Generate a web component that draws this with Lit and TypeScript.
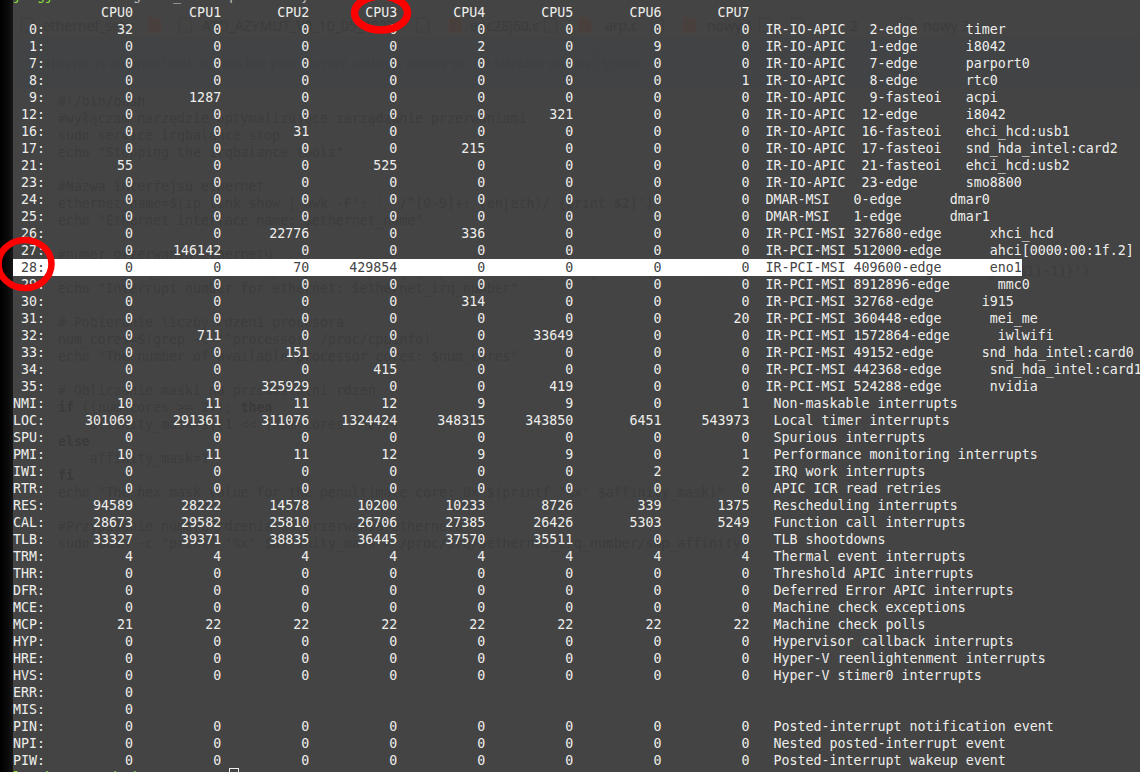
import { LitElement, html, css } from "lit";
import { customElement } from "lit/decorators.js";

type Row = [string, string[], number?, string?, number?, string?];

const Z = (n = 8) => Array(n).fill("0");
const io = "IR-IO-APIC";
const pci = "IR-PCI-MSI";
const rows: Row[] = [
  ["0", ["32", ...Z(7)], 94, io, 107, "2-edge|119|timer"],
  ["1", ["0","0","0","0","2","0","9","0"], 94, io, 107, "1-edge|119|i8042"],
  ["7", Z(), 94, io, 107, "7-edge|119|parport0"],
  ["8", [...Z(7), "1"], 94, io, 107, "8-edge|119|rtc0"],
  ["9", ["0","1287",...Z(6)], 94, io, 107, "9-fasteoi|119|acpi"],
  ["12", ["0","0","0","0","0","321","0","0"], 94, io, 106, "12-edge|119|i8042"],
  ["16", ["0","0","31",...Z(5)], 94, io, 106, "16-fasteoi|119|ehci_hcd:usb1"],
  ["17", ["0","0","0","0","215","0","0","0"], 94, io, 106, "17-fasteoi|119|snd_hda_intel:card2"],
  ["21", ["55","0","0","525",...Z(4)], 94, io, 106, "21-fasteoi|119|ehci_hcd:usb2"],
  ["23", Z(), 94, io, 106, "23-edge|119|smo8800"],
  ["24", Z(), 94, "DMAR-MSI", 105, "0-edge|117|dmar0"],
  ["25", Z(), 94, "DMAR-MSI", 105, "1-edge|117|dmar1"],
  ["26", ["0","0","22776","0","336","0","0","0"], 94, pci, 105, "327680-edge|122|xhci_hcd"],
  ["27", ["0","146142",...Z(6)], 94, pci, 105, "512000-edge|122|ahci[0000:00:1f.2]"],
  ["28", ["0","0","70","429854",...Z(4)], 94, pci, 105, "409600-edge|122|eno1"],
  ["29", Z(), 94, pci, 105, "8912896-edge|123|mmc0"],
  ["30", ["0","0","0","0","314","0","0","0"], 94, pci, 105, "32768-edge|121|i915"],
  ["31", [...Z(7), "20"], 94, pci, 105, "360448-edge|122|mei_me"],
  ["32", ["0","711","0","0","0","33649","0","0"], 94, pci, 105, "1572864-edge|123|iwlwifi"],
  ["33", ["0","0","151",...Z(5)], 94, pci, 105, "49152-edge|121|snd_hda_intel:card0"],
  ["34", ["0","0","0","415",...Z(4)], 94, pci, 105, "442368-edge|122|snd_hda_intel:card1"],
  ["35", ["0","0","325929","0","0","419","0","0"], 94, pci, 105, "524288-edge|122|nvidia"],
  ["NMI", ["10","11","11","12","9","9","0","1"], 95, "Non-maskable interrupts"],
  ["LOC", ["301069","291361","311076","1324424","348315","343850","6451","543973"], 95, "Local timer interrupts"],
  ["SPU", Z(), 95, "Spurious interrupts"],
  ["PMI", ["10","11","11","12","9","9","0","1"], 95, "Performance monitoring interrupts"],
  ["IWI", [...Z(6),"2","2"], 95, "IRQ work interrupts"],
  ["RTR", Z(), 95, "APIC ICR read retries"],
  ["RES", ["94589","28222","14578","10200","10233","8726","339","1375"], 95, "Rescheduling interrupts"],
  ["CAL", ["28673","29582","25810","26706","27385","26426","5303","5249"], 95, "Function call interrupts"],
  ["TLB", ["33327","39371","38835","36445","37570","35511","0","0"], 95, "TLB shootdowns"],
  ["TRM", Array(8).fill("4"), 95, "Thermal event interrupts"],
  ["THR", Z(), 95, "Threshold APIC interrupts"],
  ["DFR", Z(), 95, "Deferred Error APIC interrupts"],
  ["MCE", Z(), 95, "Machine check exceptions"],
  ["MCP", ["21",...Array(7).fill("22")], 95, "Machine check polls"],
  ["HYP", Z(), 95, "Hypervisor callback interrupts"],
  ["HRE", Z(), 95, "Hyper-V reenlightenment interrupts"],
  ["HVS", Z(), 95, "Hyper-V stimer0 interrupts"],
  ["ERR", ["0"]],
  ["MIS", ["0"]],
  ["PIN", Z(), 95, "Posted-interrupt notification event"],
  ["NPI", Z(), 95, "Nested posted-interrupt event"],
  ["PIW", Z(), 95, "Posted-interrupt wakeup event"],
];

function lineFor(r: Row): string {
  const [label, vals, c1, t1, c2, rest] = r;
  let s = (label + ":").padStart(4);
  vals.forEach((v, i) => {
    s += v.padStart(i === 0 ? 11 : 10) + (i < vals.length - 1 ? " " : "");
  });
  if (c1 !== undefined && t1) {
    s = s.padEnd(c1) + t1;
    if (c2 !== undefined && rest) {
      const [a, c3, b] = rest.split("|");
      s = s.padEnd(c2) + a;
      s = s.padEnd(Number(c3)) + b;
    }
  }
  return s;
}

const header = "    " + Array.from({ length: 8 }, (_, i) => ("CPU" + i).padStart(i === 0 ? 11 : 10)).join(" ");

const ghost: [string, boolean?][] = [
  ["#!/bin/bash"],
  ["#wyłączam narzędzie optymalizujące zarządzanie przerwaniami"],
  ["sudo service irqbalance stop"],
  ['echo "Stopping the irqbalance tools"'],
  [""],
  ["#Nazwa interfejsu ethernet"],
  ["ethernet_name=$(ip link show | awk -F': ' '/^[0-9]+: (en|eth)/ {print $2}')"],
  ['echo "Ethernet interface name: $ethernet_name"'],
  [""],
  ["#numer przerwania ethernetu"],
  ["ethernet_irq_number=$(cat /proc/interrupts | grep \"$ethernet_name\" | awk '{print $1}' | awk '{print substr($1, 1, length($1)-1)}')"],
  ['echo "Interrupt number for ethernet: $ethernet_irq_number"'],
  [""],
  ["# Pobieranie liczby rdzeni procesora"],
  ["num_cores=$(grep -c '^processor' /proc/cpuinfo)"],
  ['echo "The number of available processor cores: $num_cores"'],
  [""],
  ["# Obliczanie maski na przedostatni rdzeń"],
  ["if ((num_cores >= 2)); then", true],
  ["    affinity_mask=$((1 << (num_cores - 2)))"],
  ["else", true],
  ["    affinity_mask=1"],
  ["fi", true],
  ["echo \"The hex mask value for the penultimate core: 0x $(printf '%x' $affinity_mask)\""],
  [""],
  ["#Przypisanie numeru rdzenia do przerwania ethernetu"],
  ['sudo bash -c "printf \'%x\' $affinity_mask > /proc/irq/$ethernet_irq_number/smp_affinity"'],
];

const tabs: [number, string][] = [
  [43, "ethernet_setu"],
  [202, "ATD_AZYMUT_V0_10_05_2023"],
  [470, "enc28j60.c"],
  [605, "arp.c"],
  [707, "nowy 1"],
  [850, "2"],
  [923, "nowy 3"],
];
const icons: [number, boolean][] = [
  [20, false], [147, true], [178, false], [415, false], [448, true], [543, false],
  [577, true], [650, false], [682, true], [758, false], [790, false], [899, false],
];

@customElement("app-root")
export class AppRoot extends LitElement {
  static styles = css`
    :host {
      display: flex;
      width: 1140px;
      height: 772px;
      overflow: hidden;
      position: relative;
      background: #444444;
      font-family: "DejaVu Sans Mono", monospace;
    }
    .strip {
      width: 13px;
      flex: none;
      background: linear-gradient(90deg, #000 0, #0a0a0a 8px, #181818 13px);
    }
    .notice {
      position: absolute;
      left: 13px;
      right: 0;
      top: 37px;
      height: 51px;
      background: #424345;
    }
    .notice-text {
      position: absolute;
      left: 31px;
      top: 17px;
      font: 13.5px/18px "Open Sans", sans-serif;
      color: #3e4042;
      white-space: nowrap;
    }
    .btn {
      position: absolute;
      top: 13px;
      height: 26px;
      box-sizing: border-box;
      border: 1px solid #3f4143;
      font: 13.5px/24px "Open Sans", sans-serif;
      color: #3e4042;
      text-align: center;
    }
    .btn.use { left: 500px; width: 83px; }
    .btn.ign { left: 585px; width: 49px; }
    .tab {
      position: absolute;
      top: 16px;
      font: 14px/20px "Open Sans", sans-serif;
      color: #3c3c3c;
      white-space: nowrap;
    }
    .tab-icon {
      position: absolute;
      top: 17px;
      width: 15px;
      height: 16px;
      fill: none;
      stroke: #3f3f3f;
      stroke-width: 1.2;
    }
    .tab-icon.save { stroke: #4e403c; fill: #47403d; }
    .code {
      position: absolute;
      left: 58px;
      top: 93px;
      font-size: 13.2px;
      line-height: 17px;
      color: #3d3d3d;
      filter: blur(0.3px);
    }
    .code .line { height: 17px; white-space: pre; }
    .code .bold { font-weight: 700; color: #3a3a3a; }
    .term {
      position: relative;
      flex: 1;
      font-size: 13.3px;
      color: #eeeeec;
    }
    .row {
      height: 17px;
      line-height: 17px;
      white-space: pre;
      width: fit-content;
    }
    .row.top { margin-top: -13px; }
    .row.hl { background: #ffffff; color: #444444; }
    .green { color: #8ae234; }
    .dim { color: #bdbdbd; }
    .cursor {
      display: inline-block;
      width: 10px;
      height: 16px;
      box-sizing: border-box;
      border: 1px solid #eeeeec;
      vertical-align: top;
      margin-top: -1px;
    }
    .marks {
      position: absolute;
      left: 0;
      top: 0;
      width: 1140px;
      height: 772px;
      pointer-events: none;
    }
  `;

  render() {
    return html`
      <div class="notice">
        <span class="notice-text">This file is indented with spaces but your current settings specify to use tabs.</span>
        <span class="btn use">Use spaces</span>
        <span class="btn ign">Ignore</span>
      </div>
      ${icons.map(([x, red]) => html`
        <svg class="tab-icon ${red ? "save" : ""}" style="left:${x}px" viewBox="0 0 15 16">
          <path d="M1.5 1h9l3 3v11h-12z" />
          ${red ? html`<path d="M4 1v5h6V1M3.5 15V9h8v6" />` : html`<path d="M4 6h7M4 9h7M4 12h7" />`}
        </svg>`)}
      ${tabs.map(([x, t]) => html`<span class="tab" style="left:${x}px">${t}</span>`)}
      <div class="code">
        ${ghost.map(([t, b]) => html`<div class="line">${b ? this.boldLine(t) : t}</div>`)}
      </div>
      <div class="strip"></div>
      <div class="term">
        <div class="row top"><span class="green">j  gj</span><span class="dim">          g    _      p        y</span></div>
        <div class="row">${header}</div>
        ${rows.map((r) => html`<div class="row ${r[0] === "28" ? "hl" : ""}">${lineFor(r)}</div>`)}
        <div class="row"><span class="green">l   k       d  b</span><span class="dim">         t</span> <span class="cursor"></span></div>
      </div>
      <svg class="marks" viewBox="0 0 1140 772">
        <ellipse cx="381" cy="13" rx="26.5" ry="17" fill="none" stroke="#ff0000" stroke-width="7.5" />
        <ellipse cx="25" cy="264" rx="26.5" ry="24" fill="none" stroke="#ff0000" stroke-width="6.5" />
      </svg>
    `;
  }

  boldLine(t: string) {
    if (t.startsWith("if")) {
      return html`<span class="bold">if</span> ((num_cores >= 2)); <span class="bold">then</span>`;
    }
    return html`<span class="bold">${t}</span>`;
  }
}
